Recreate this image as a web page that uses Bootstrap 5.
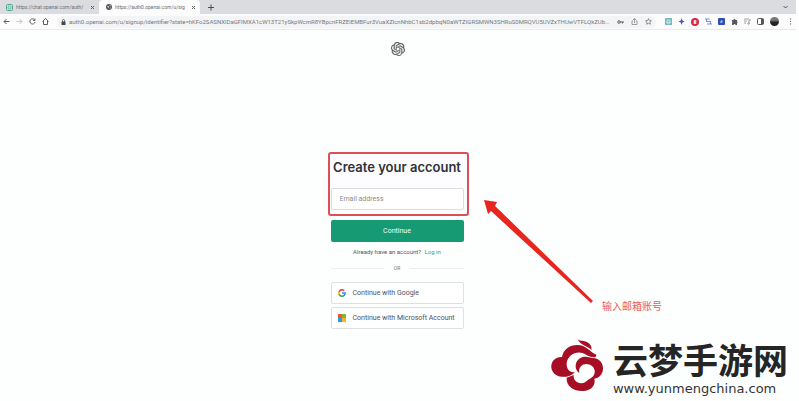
<!DOCTYPE html>
<html lang="en">
<head>
<meta charset="utf-8">
<meta name="viewport" content="width=device-width, initial-scale=1">
<title>Create your account</title>
<link href="https://cdn.jsdelivr.net/npm/bootstrap@5.3.0/dist/css/bootstrap.min.css" rel="stylesheet">
<style>
body{font-family:Roboto,"Noto Sans CJK SC",sans-serif;font-size:6px;line-height:10px;color:#353740;background:#fdfefe;padding-right:3px}
button,input{font-family:inherit}
.icon-btn{border:0;background:none;padding:0;display:flex;color:#5d6065}
.tabstrip{height:14px;background:#dbdce0;color:#6b6e73}
.browser-tab{width:99px;height:14px;padding:0 4px 0 6px;gap:3px}
.browser-tab.current{background:#fcfcfd;border-radius:4px 4px 0 0;width:101px;padding-left:7px}
.tab-title{font-size:5px;color:#6b6e73;text-decoration:none;white-space:nowrap;flex:1}
.toolbar{height:16px;background:#fcfcfd;border-bottom:1px solid #e9eaec;padding:0 4px 0 3px}
.nav-icons{gap:6px;width:54px}
.omnibox{background:#f3f4f6;border-radius:6px;height:12px;padding:0 4px;gap:3px;min-width:0}
.url{border:0;background:none;padding:0;font-size:6px;line-height:10px;color:#77797d;min-width:0;text-overflow:ellipsis}
.url:focus{outline:0}
.extensions{gap:6px;padding-left:9px}
.avatar{width:9px;height:9px;border-radius:50%;background:linear-gradient(#777 0 35%,#222 60%)}
.signup{width:141px;margin-top:96px}
.marked{border:2px solid #d95158;border-radius:3px;padding:3px 3px 4px 1px;background:#fdfcfe}
.marked h1{font-family:Inter,sans-serif;font-size:13px;line-height:20px;font-weight:600;color:#30323b;margin:0 0 11px}
.email{width:100%;height:22px;border:1px solid #dcdde1;border-radius:2px;padding:0 8px;font-size:7px;color:#555;background:#fff}
.email::placeholder{color:#8a8c92;opacity:1}
.rest{padding:0 5px 0 3px}
.btn-go{height:22px;margin-top:4px;padding:0;border:0;border-radius:2px;background:#159a73;color:#e8fff6;font-size:7px;line-height:10px}
.btn-go:hover{background:#12835f;color:#fff}
.small-line{margin-top:5px;font-size:6px;line-height:10px;color:#55575e}
.small-line a{color:#35a27e;text-decoration:none;margin-left:2px}
.divider{gap:10px;margin:6px 0 9px;font-size:5px;color:#777}
.divider hr{flex:1;margin:0;border-color:#b9bbc0}
.btn-alt{height:22px;border:1px solid #dfe0e3;border-radius:2px;background:#fff;color:#50525a;padding:0 6px;gap:7px;font-size:7px;line-height:10px;white-space:nowrap;margin-bottom:3px}
.btn-alt:hover{background:#f4f4f4}
.arrow{position:absolute;left:481px;top:168px}
.note{position:absolute;left:602px;top:269px;font-size:10px;line-height:16px;color:#e85c60;white-space:nowrap}
.site-mark{gap:9px;color:#252525;padding:5px 8px 0 0}
.site-name{font-family:"Noto Sans CJK SC",sans-serif;font-weight:700;font-size:35px;line-height:44px}
.site-url{font-family:"DejaVu Sans",sans-serif;font-size:13px;line-height:16px;color:#333}
</style>
<script src="https://cdn.jsdelivr.net/npm/bootstrap@5.3.0/dist/js/bootstrap.bundle.min.js"></script>
</head>
<body>
<header>
  <div class="tabstrip d-flex align-items-center">
    <div class="browser-tab d-flex align-items-center">
      <svg width="7" height="7" viewBox="0 0 7 7"><rect x=".5" y=".5" width="6" height="6" rx="1" fill="#c6e4da" stroke="#55a58d"/><circle cx="3.5" cy="3.5" r="1.5" fill="none" stroke="#55a58d" stroke-width=".7"/></svg>
      <a class="tab-title" href="#">https://chat.openai.com/auth/</a>
      <button class="icon-btn" aria-label="Close tab"><svg width="5" height="5" viewBox="0 0 5 5" stroke="currentColor"><path d="M1 1l3 3M4 1L1 4"/></svg></button>
    </div>
    <div class="browser-tab current d-flex align-items-center">
      <svg width="6" height="6" viewBox="0 0 6 6"><circle cx="3" cy="3" r="3" fill="#55585d"/><path d="M1 2l2 .5L2.500 4zM3.500 1l1.500 1-1 .5zM4 4l1-.5-1 1.500z" fill="#fff"/></svg>
      <a class="tab-title" href="#">https://auth0.openai.com/u/sig</a>
      <button class="icon-btn" aria-label="Close tab"><svg width="5" height="5" viewBox="0 0 5 5" stroke="currentColor"><path d="M1 1l3 3M4 1L1 4"/></svg></button>
    </div>
    <button class="icon-btn ms-1 ps-1" aria-label="New tab"><svg width="7" height="7" viewBox="0 0 7 7" stroke="#4b4d50"><path d="M0 3.500h6M3 .5v6"/></svg></button>
    <button class="icon-btn ms-auto me-2" aria-label="Search tabs"><svg width="5" height="4" viewBox="0 0 5 4" fill="none" stroke="#55575b"><path d="M.5 1l2 2 2-2"/></svg></button>
  </div>
  <div class="toolbar d-flex align-items-center">
    <div class="nav-icons d-flex align-items-center flex-shrink-0">
      <button class="icon-btn" aria-label="Back"><svg width="7" height="7" viewBox="0 0 7 7" fill="none" stroke="currentColor"><path d="M6.500 3.500H1M3.500 1L1 3.500 3.500 6"/></svg></button>
      <button class="icon-btn" aria-label="Forward"><svg width="7" height="7" viewBox="0 0 7 7" fill="none" stroke="#c4c6c9"><path d="M.5 3.500H6M3.500 1L6 3.500 3.500 6"/></svg></button>
      <button class="icon-btn" aria-label="Reload"><svg width="7" height="7" viewBox="0 0 7 7" fill="none" stroke="currentColor"><path d="M5.500 1.800A2.600 2.600 0 1 0 6 4M6 .5v2H4"/></svg></button>
      <button class="icon-btn" aria-label="Home"><svg width="7" height="7" viewBox="0 0 7 7" fill="none" stroke="currentColor"><path d="M.5 3.500l3-3 3 3M1.500 3v3.500h4V3"/></svg></button>
    </div>
    <div class="omnibox d-flex align-items-center flex-grow-1">
      <svg class="flex-shrink-0" width="5" height="6" viewBox="0 0 5 6"><path d="M.5 2.500h4V6h-4z" fill="#45484c"/><path d="M1.500 3V1.500a1 1 0 0 1 2 0V3" fill="none" stroke="#45484c" stroke-width=".7"/></svg>
      <input class="url flex-grow-1" type="text" aria-label="Address" value="auth0.openai.com/u/signup/identifier?state=hKFo2SASNXlDaGFIMXA1cW13T21ySkpWcmR8YBpcnFRZElEMBFur3VuaXZlcnNhbC1sb2dpbqN0aWTZIGRSMWN3SHRuS0MRQVU5UVZxTHUwVTFLQkZUbkJKSGFPYWRQUVZ1">
      <button class="icon-btn ms-1" aria-label="Passwords"><svg width="7" height="6" viewBox="0 0 7 6"><circle cx="2" cy="3" r="1.300" fill="none" stroke="currentColor"/><path d="M3 2.500h4v1H6v1H5v-1H3z" fill="currentColor"/></svg></button>
      <button class="icon-btn ms-1" aria-label="Share"><svg width="7" height="7" viewBox="0 0 7 7" fill="none" stroke="#85878b" stroke-width=".8"><path d="M2 3H1v3.500h5V3H5M3.500 5V.5M2 2L3.500.5 5 2"/></svg></button>
      <button class="icon-btn ms-1" aria-label="Bookmark"><svg width="7" height="7" viewBox="0 0 7 7" fill="none" stroke="#737579" stroke-width=".8"><path d="M3.500.7l.9 1.800 2 .3L5 4.200l.3 2-1.800-1-1.800 1 .3-2L.6 2.800l2-.3z"/></svg></button>
    </div>
    <div class="extensions d-flex align-items-center flex-shrink-0">
      <button class="icon-btn" aria-label="Extension"><svg width="7" height="7" viewBox="0 0 7 7"><path fill="#79bcc3" d="M0 0h7v7H0z"/><path d="M2 5V3.500a1.500 1.500 0 0 1 3 0V5z" fill="none" stroke="#dff2f4"/></svg></button>
      <button class="icon-btn" aria-label="Extension"><svg width="7" height="7" viewBox="0 0 7 7"><path fill="#4055cb" d="M3.500 0L4.500 2.500 6.500 3.500 4.500 4.500 3.500 7 2.800 4.500.5 3.500 2.800 2.500z"/></svg></button>
      <button class="icon-btn" aria-label="Ad blocker"><svg width="8" height="8" viewBox="0 0 8 8"><circle cx="4" cy="4" r="4" fill="#d92842"/><path d="M2.700 2v4h2.600V2z" fill="#f7dce0"/></svg></button>
      <button class="icon-btn" aria-label="Translate"><svg width="7" height="7" viewBox="0 0 7 7" fill="none" stroke="#7d8fd8"><path d="M0 1h5M1.500 1v3M2 6h5M5.500 3v3M1 3.500h5"/></svg></button>
      <button class="icon-btn" aria-label="Extension"><svg width="7" height="7" viewBox="0 0 7 7"><rect width="7" height="7" rx="1" fill="#2c4fb0"/><path d="M2 5l1-3 2 1-1 2z" fill="#9bb1e6"/></svg></button>
      <button class="icon-btn" aria-label="Extensions"><svg width="7" height="7" viewBox="0 0 7 7" fill="#55585c"><path d="M1 2h1.500a1 1 0 0 1 2 0H6v1.500a1 1 0 0 1 0 1.800V7H4.500a1 1 0 0 0-2 0H1V5a1 1 0 0 0 0-1.500z"/></svg></button>
      <button class="icon-btn" aria-label="Media"><svg width="7" height="7" viewBox="0 0 7 7" fill="none" stroke="#8a8c90" stroke-width=".8"><path d="M0 1h5M0 3h3M0 5h2M5 5.500V2h2"/><circle cx="4.500" cy="5.500" r=".8"/></svg></button>
      <button class="icon-btn" aria-label="Side panel"><svg width="7" height="7" viewBox="0 0 7 7"><rect x=".5" y=".5" width="6" height="6" rx="1" fill="none" stroke="#55585c"/><path d="M4 1h2.500v5H4z" fill="#55585c"/></svg></button>
      <button class="icon-btn" aria-label="Profile"><span class="avatar d-block"></span></button>
      <button class="icon-btn ms-1" aria-label="Menu"><svg width="3" height="7" viewBox="0 0 3 7" fill="#77797d"><circle cx="1.500" cy="1" r=".7"/><circle cx="1.500" cy="3.500" r=".7"/><circle cx="1.500" cy="6" r=".7"/></svg></button>
    </div>
  </div>
</header>
<main class="position-relative d-flex flex-column align-items-center pt-2">
  <svg class="mt-1" width="14" height="14" viewBox="0 0 24 24" fill="#55575a" stroke="#77797c" stroke-width=".5" role="img" aria-label="OpenAI"><path d="M22.280 9.820a5.980 5.980 0 0 0-.520-4.910 6.050 6.050 0 0 0-6.510-2.900A6.070 6.070 0 0 0 4.980 4.180a5.980 5.980 0 0 0-4 2.900 6.050 6.050 0 0 0 .740 7.100 5.980 5.980 0 0 0 .510 4.910 6.050 6.050 0 0 0 6.510 2.900A5.980 5.980 0 0 0 13.260 24a6.060 6.060 0 0 0 5.770-4.210 5.990 5.990 0 0 0 4-2.900 6.060 6.060 0 0 0-.750-7.070zM13.260 22.430a4.480 4.480 0 0 1-2.880-1.040l4.920-2.840a.8.8 0 0 0 .390-.680v-6.740l2.020 1.170v5.620a4.500 4.500 0 0 1-4.450 4.510zM3.600 18.300a4.470 4.470 0 0 1-.540-3.010l4.930 2.840a.77.77 0 0 0 .780 0l5.840-3.370v2.400l-4.870 2.800A4.500 4.500 0 0 1 3.600 18.300zM2.340 7.900a4.490 4.490 0 0 1 2.370-1.980v5.680a.77.77 0 0 0 .390.680l5.810 3.350-2.020 1.170-4.830-2.790A4.500 4.500 0 0 1 2.340 7.900zm16.600 3.850l-5.840-3.390 2.020-1.160 4.830 2.790a4.490 4.490 0 0 1-.680 8.100v-5.680a.79.790 0 0 0-.330-.660zm2-3.020l-4.910-2.870a.78.780 0 0 0-.790 0L9.410 9.230V6.900l4.860-2.810a4.500 4.500 0 0 1 6.670 4.640zM8.310 12.860l-2.020-1.160V6.070a4.500 4.500 0 0 1 7.370-3.450L8.780 5.460a.8.800 0 0 0-.390.680zm1.100-2.360l2.600-1.500 2.600 1.500v3l-2.600 1.500-2.600-1.500z"/></svg>
  <form class="signup" onsubmit="return false">
    <div class="marked">
      <h1 class="text-center text-nowrap">Create your account</h1>
      <input class="email d-block" type="email" placeholder="Email address" aria-label="Email address">
    </div>
    <div class="rest">
      <button class="btn btn-go w-100" type="submit">Continue</button>
      <p class="small-line text-center mb-0">Already have an account? <a href="#">Log in</a></p>
      <div class="divider d-flex align-items-center"><hr>OR<hr></div>
      <button class="btn btn-alt w-100 d-flex align-items-center" type="button">
        <svg width="8" height="8" viewBox="0 0 18 18"><path fill="#4285f4" d="M17.600 9.200c0-.6-.1-1.200-.2-1.700H9v3.400h4.800a4.200 4.200 0 0 1-1.800 2.700v2.300h2.900c1.700-1.600 2.700-3.900 2.700-6.700z"/><path fill="#34a853" d="M9 18c2.400 0 4.500-.8 6-2.200l-3-2.200c-2.300 1.500-6.600 1-8-2.900H1V13a9 9 0 0 0 8 5z"/><path fill="#fbbc05" d="M4 10.700a5.400 5.400 0 0 1 0-3.400V5H1a9 9 0 0 0 0 8z"/><path fill="#ea4335" d="M9 3.600c1.300 0 2.500.5 3.400 1.300L15 2.300A9 9 0 0 0 1 5l3 2.300a5.400 5.400 0 0 1 5-3.700z"/></svg>
        Continue with Google</button>
      <button class="btn btn-alt w-100 d-flex align-items-center" type="button">
        <svg class="flex-shrink-0" width="8" height="8" viewBox="0 0 8 8"><path fill="#e8593a" d="M0 0h4v4H0z"/><path fill="#84b52b" d="M4 0h4v4H4z"/><path fill="#2a9bdc" d="M0 4h4v4H0z"/><path fill="#f4b72c" d="M4 4h4v4H4z"/></svg>
        Continue with Microsoft Account</button>
    </div>
  </form>
  <svg class="arrow" width="114" height="108" viewBox="0 0 114 108" aria-hidden="true"><path fill="#e8251f" d="M3 2L16 4 14 8 112 103 110 105 10 13 7 16z"/></svg>
  <div class="note">输入邮箱账号</div>
</main>
<footer class="site-mark d-flex align-items-start justify-content-end">
  <svg width="54" height="56" viewBox="0 0 162 168" fill="#a50e24" role="img" aria-label="云梦手游网">
    <path d="M83 7C88 13 98 10 108 14C119 18 127 27 124 39C117 28 92 27 83 7z"/>
    <path d="M50 119C30 122 7 114 4 92C2 73 17 59 36 60C39 38 59 24 82 24C108 24 119 44 139 53L137 60C122 64 111 53 98 48C76 41 52 56 50 79C49 98 60 108 75 105C70 111 60 118 50 119z"/>
    <path d="M88 108C74 99 73 77 87 66C101 53 119 62 135 64C149 66 159 79 159 94C159 112 147 124 133 125C139 145 121 162 99 162C71 163 48 147 50 122L71 114C69 130 83 142 99 138C109 136 110 129 120 125C136 118 139 99 127 88C109 73 83 84 88 108z"/>
  </svg>
  <div>
    <div class="site-name text-nowrap">云梦手游网</div>
    <div class="site-url text-nowrap">www.yunmengchina.com</div>
  </div>
</footer>
</body>
</html>
